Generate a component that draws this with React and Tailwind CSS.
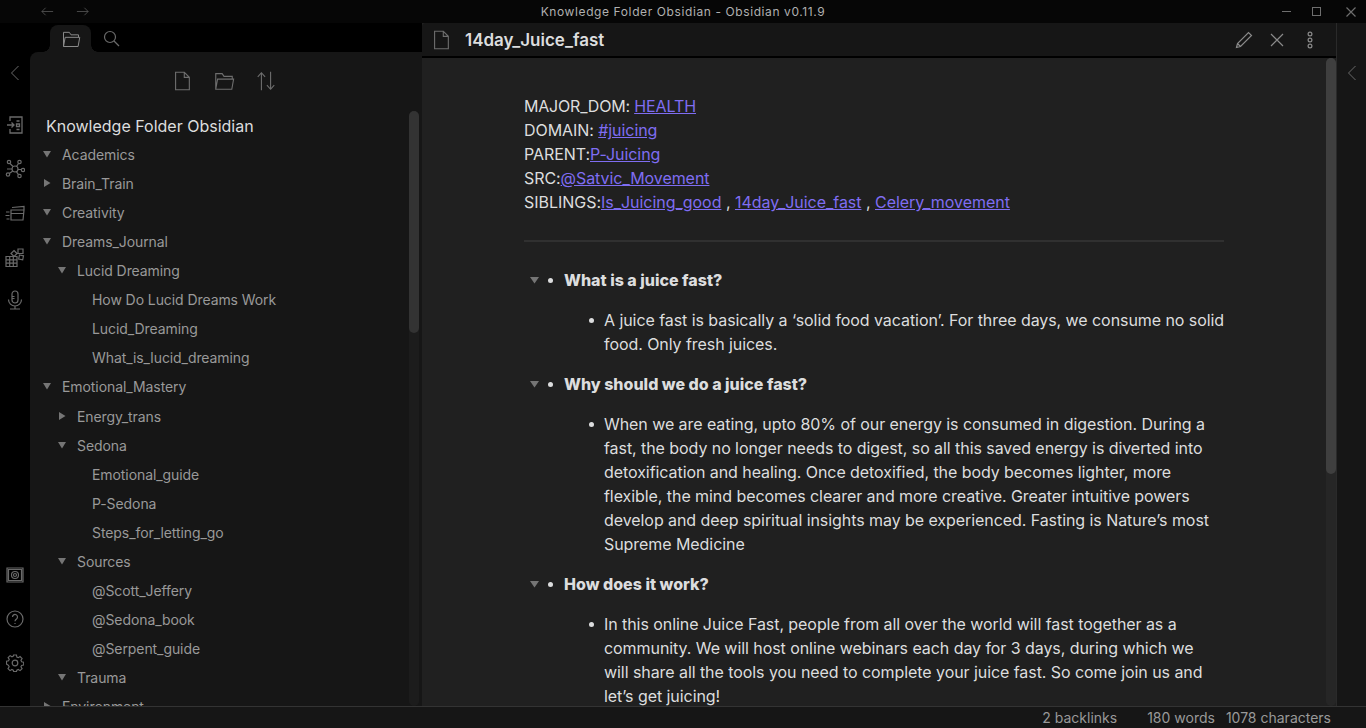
const font = { fontFamily: "Inter, 'Noto Sans', sans-serif" };

/* ───── Tree data: [depth, label, state] ───── */
const tree = [
  [0, "Academics", "open"],
  [0, "Brain_Train", "closed"],
  [0, "Creativity", "open"],
  [0, "Dreams_Journal", "open"],
  [1, "Lucid Dreaming", "open"],
  [2, "How Do Lucid Dreams Work"],
  [2, "Lucid_Dreaming"],
  [2, "What_is_lucid_dreaming"],
  [0, "Emotional_Mastery", "open"],
  [1, "Energy_trans", "closed"],
  [1, "Sedona", "open"],
  [2, "Emotional_guide"],
  [2, "P-Sedona"],
  [2, "Steps_for_letting_go"],
  [1, "Sources", "open"],
  [2, "@Scott_Jeffery"],
  [2, "@Sedona_book"],
  [2, "@Serpent_guide"],
  [1, "Trauma", "open"],
  [0, "Environment", "closed"],
];

const Icon = ({ size = 24, vb = 24, className = "", children }) => (
  <svg
    width={size}
    height={size}
    viewBox={`0 0 ${vb} ${vb}`}
    fill="none"
    stroke="currentColor"
    strokeWidth="1.2"
    className={className}
  >
    {children}
  </svg>
);

const FileIcon = ({ size = 20 }) => (
  <Icon size={size}>
    <path d="M5 2.5h9.5L20 8v13.5H5zM14.5 2.5V8H20" />
  </Icon>
);

const FolderIcon = ({ size = 20 }) => (
  <Icon size={size}>
    <path d="M3 21V4h7l2 3h9v3M3 21l2-11h17.500L20.500 21z" />
  </Icon>
);

const Triangle = ({ open }) => (
  <svg width="8" height="8" viewBox="0 0 8 8" className="-ml-px text-[#757575]" fill="currentColor">
    {open ? <path d="M0 1h8L4 7.500z" /> : <path d="M1 0v8l6.500-4z" />}
  </svg>
);

function TreeRow({ depth, label, state }) {
  const indent = ["pl-[14px]", "pl-[29px]", "pl-[44px]"][depth];
  // the tree slips one pixel down after Emotional_Mastery
  const nudge = label === "Energy_trans" ? "mt-px" : "";
  return (
    <div className={`flex h-[29px] shrink-0 items-center ${nudge} ${indent} text-[14px] tracking-[-0.08px] text-[#999]`}>
      <span className="flex w-[18px] shrink-0 items-center pb-[2px]">
        {state && <Triangle open={state === "open"} />}
      </span>
      <span className="whitespace-nowrap">{label}</span>
    </div>
  );
}

const A = ({ children }) => <a className="text-[#7f6df2] underline">{children}</a>;

function Section({ title, children }) {
  return (
    <div className="relative mb-[16px]">
      <div className="flex h-[24px] items-center pl-[40px] font-extrabold text-[#dcddde]">
        <span className="absolute left-[6px] top-[8px]">
          <svg width="9" height="8" viewBox="0 0 9 8" className="text-[#757575]" fill="currentColor">
            <path d="M0 1h9L4.500 7.500z" />
          </svg>
        </span>
        <span className="absolute left-[24px] top-[10px] h-[5px] w-[5px] rounded-full bg-[#dcddde]" />
        {title}
      </div>
      <div className="relative mt-[16px] whitespace-nowrap pl-[80px] tracking-[-0.065px]">
        <span className="absolute left-[65px] top-[10px] h-[5px] w-[5px] rounded-full bg-[#dcddde]" />
        {children}
      </div>
    </div>
  );
}

export default function App() {
  return (
    <div className="flex h-[728px] w-[1366px] flex-col overflow-hidden bg-black text-[16px] leading-[24px] text-[#dcddde]" style={font}>
      {/* ── Title bar ── */}
      <div className="relative flex h-[23px] shrink-0 items-center justify-center bg-[#060606] text-[12px] text-[#b0b0b0] tracking-[0.6px]">
        <div className="absolute left-[40px] top-[4px] flex gap-[20px] text-[#5c5c5c]">
          <Icon size={15}>
            <path d="M21 12H3M9 6l-6 6 6 6" />
          </Icon>
          <Icon size={15}>
            <path d="M3 12h18M15 6l6 6-6 6" />
          </Icon>
        </div>
        <span>Knowledge Folder Obsidian - Obsidian v0.11.9</span>
        <div className="absolute right-[0px] top-[0px] flex h-[23px] items-center text-[#6e6e6e]">
          <span className="mr-[21px] h-px w-[9px] bg-current" />
          <span className="mr-[25px] h-[9px] w-[9px] border border-current" />
          <Icon size={10} vb={10} className="mr-[10px]">
            <path d="M0.500 0.500l9 9M9.500 0.500l-9 9" />
          </Icon>
        </div>
      </div>

      <div className="flex min-h-0 flex-1">
        {/* ── Ribbon ── */}
        <div className="flex w-[30px] shrink-0 flex-col items-center bg-black text-[#6a6a6a]">
          <Icon size={16} vb={16} className="mt-[42px]">
            <path d="M11.500 1L4.500 8l7 7" strokeWidth="1" />
          </Icon>
          <Icon size={18} vb={18} className="mt-[35px]">
            <path d="M4 5V1h12v16H4v-4M1 9h7M5.500 6.500L8 9l-2.500 2.500M10.500 5h3M10.500 8h3v2.500h-3zM10.500 13.500h3" strokeWidth="1.300" />
          </Icon>
          <Icon size={20} vb={20} className="mt-[25px]">
            <circle cx="10" cy="10" r="3" />
            <circle cx="4" cy="3" r="1.700" />
            <circle cx="14.500" cy="3" r="1.700" />
            <circle cx="18" cy="11" r="1.700" />
            <circle cx="14.500" cy="17" r="1.700" />
            <circle cx="3" cy="15.500" r="1.700" />
            <path d="M5 4.500l3 3M13.500 4.500l-2 3M13 10.500h3.300M11.500 12.800l2 2.800M7.800 12l-3.500 2.500M2 10h5" />
          </Icon>
          <Icon size={20} vb={20} className="mt-[24px]">
            <path d="M6 7h13l-1 10H6zM6 10.500h12.600M7 4.500l12-1v3.500M1 9h3.500M0.500 12.500h4M1.500 16h3" />
          </Icon>
          <Icon size={20} vb={20} className="mt-[24px]">
            <path d="M1 9.500h11v10H1zM1 12.800h11M1 16.200h11M4.700 9.500v10M8.300 9.500v10M13 2l5 0 0 4.500-5 0zM14.500 8l4 .8-.8 4-4-.8zM9 3.500l3 3-3 3-3-3z" />
          </Icon>
          <Icon size={20} vb={20} className="mt-[23px]">
            <path d="M7 4a3 3 0 016 0v6a3 3 0 01-6 0zM3.500 9.500a6.500 6.500 0 0013 0M10 16v2.500M5 19h10M7 6.500h2.500M7 8.500h2.500" />
          </Icon>
          <div className="flex-1" />
          <Icon size={18} vb={18} className="mb-[26px]">
            <path d="M1 2h16v14H1zM2.500 3.500h13v11h-13z" />
            <circle cx="9" cy="9" r="3.500" />
            <circle cx="9" cy="9" r="1.500" />
          </Icon>
          <Icon size={18} vb={18} className="mb-[26px]">
            <circle cx="9" cy="9" r="8" />
            <path d="M6.500 7a2.500 2.500 0 114 2c-1 .7-1.500 1.200-1.500 2.300M9 13v1" />
          </Icon>
          <Icon size={18} vb={18} className="mb-[34px]">
            <circle cx="9" cy="9" r="2.800" />
            <path d="M7.500 1h3l.4 2.200 1.500.7 1.900-1.200 2.100 2.100-1.200 1.900.7 1.500 2.200.4v3l-2.200.4-.7 1.500 1.200 1.900-2.100 2.100-1.900-1.200-1.500.7-.4 1.400h-3l-.4-1.400-1.500-.7-1.900 1.200-2.100-2.100 1.200-1.900-.7-1.500L0 10.600v-3l2.200-.4.700-1.500L1.700 3.800l2.100-2.100 1.900 1.200 1.500-.7z" transform="translate(0.500 0) scale(0.950)" />
          </Icon>
        </div>

        {/* ── File explorer ── */}
        <div className="flex w-[392px] shrink-0 flex-col">
          <div className="flex h-[29px] shrink-0 items-end bg-black pl-[20px] text-[#6a6a6a]">
            <div className="relative flex h-[27px] w-[41px] items-center justify-center rounded-t-[8px] bg-[#161616] text-[#8a8a8a]">
              <span className="absolute bottom-0 right-full h-[7px] w-[7px] bg-[radial-gradient(circle_at_0_0,transparent_6.5px,#161616_7px)]" />
              <FolderIcon size={20} />
              <span className="absolute bottom-0 left-full h-[7px] w-[7px] bg-[radial-gradient(circle_at_100%_0,transparent_6.5px,#161616_7px)]" />
            </div>
            <div className="ml-[12px] flex h-[27px] items-center">
              <Icon size={17} vb={17}>
                <circle cx="7" cy="7" r="5.500" />
                <path d="M11 11l5 5" />
              </Icon>
            </div>
          </div>
          <div className="flex min-h-0 flex-1 rounded-tl-[8px] bg-[#161616]">
            <div className="flex min-w-0 flex-1 flex-col overflow-hidden">
              <div className="mt-[18px] flex shrink-0 items-center justify-center gap-[20px] pl-[8px] text-[#6e6e6e]">
                <FileIcon size={22} />
                <FolderIcon size={22} />
                <Icon size={22}>
                  <path d="M7 22V3M3 7.500L7 3l4 4.500M17 2v19M13 16.500l4 4.500 4-4.500" />
                </Icon>
              </div>
              <div className="mt-[22px] h-[26px] shrink-0 pl-[16px] text-[16px] text-[#dcddde]">Knowledge Folder Obsidian</div>
              {tree.map(([depth, label, state]) => (
                <TreeRow key={label} depth={depth} label={label} state={state} />
              ))}
            </div>
            <div className="mt-[59px] flex w-[13px] shrink-0 pr-[3px]">
              <div className="w-[10px] self-stretch rounded-[5px] bg-[#1c1c1c]">
                <div className="h-[222px] rounded-[5px] bg-[#333]" />
              </div>
            </div>
          </div>
        </div>

        {/* ── Note pane ── */}
        <div className="flex min-w-0 flex-1 flex-col border-r border-[#2a2a2a] bg-[#202020]">
          <div className="flex h-[35px] shrink-0 items-center rounded-tl-[4px] border-b-2 border-black bg-[#161616] pl-[8px] pr-[17px]">
            <span className="text-[#6e6e6e]">
              <FileIcon size={22} />
            </span>
            <span className="ml-[13px] flex-1 text-[17px] font-semibold text-[#dcddde]">14day_Juice_fast</span>
            <div className="flex items-center text-[#8a8a8a]">
              <Icon size={18} vb={18}>
                <path d="M1.500 16.500l1-4L13.500 1.500l3 3L5.500 15.500zM2.500 12.500l3 3" />
              </Icon>
              <Icon size={18} vb={18} className="ml-[15px]">
                <path d="M3 3l12 12M15 3L3 15" />
              </Icon>
              <Icon size={18} vb={18} className="ml-[15px]">
                <circle cx="9" cy="3" r="1.900" />
                <circle cx="9" cy="9" r="1.900" />
                <circle cx="9" cy="15" r="1.900" />
              </Icon>
            </div>
          </div>
          <div className="flex min-h-0 flex-1">
            <div className="min-w-0 flex-1 overflow-hidden">
              <div className="ml-[102px] w-[700px] pt-[36px]">
                <div className="tracking-[-0.065px]">
                  <p><span className="tracking-[-0.2px]">MAJOR_DOM: </span><A>HEALTH</A></p>
                  <p>DOMAIN: <A>#juicing</A></p>
                  <p>PARENT:<A>P-Juicing</A></p>
                  <p>SRC:<A>@Satvic_Movement</A></p>
                  <p className="tracking-[-0.03px]">SIBLINGS:<A>Is_Juicing_good</A> , <A>14day_Juice_fast</A> , <A>Celery_movement</A></p>
                </div>
                <hr className="mb-[26px] mt-[26px] border-t-2 border-[#303030]" />
                <Section title="What is a juice fast?">
                  A juice fast is basically a ‘solid food vacation’. For three days, we consume no solid<br />
                  food. Only fresh juices.
                </Section>
                <Section title="Why should we do a juice fast?">
                  When we are eating, upto 80% of our energy is consumed in digestion. During a<br />
                  fast, the body no longer needs to digest, so all this saved energy is diverted into<br />
                  detoxification and healing. Once detoxified, the body becomes lighter, more<br />
                  flexible, the mind becomes clearer and more creative. Greater intuitive powers<br />
                  develop and deep spiritual insights may be experienced. Fasting is Nature’s most<br />
                  Supreme Medicine
                </Section>
                <Section title="How does it work?">
                  In this online Juice Fast, people from all over the world will fast together as a<br />
                  community. We will host online webinars each day for 3 days, during which we<br />
                  will share all the tools you need to complete your juice fast. So come join us and<br />
                  let’s get juicing!
                </Section>
              </div>
            </div>
            <div className="w-[10px] shrink-0 rounded-[5px] bg-[#262626]">
              <div className="h-[416px] rounded-[5px] bg-[#3f3f3f]" />
            </div>
          </div>
        </div>

        {/* ── Right collapsed sidebar ── */}
        <div className="flex w-[29px] shrink-0 justify-center bg-[#161616] pt-[42px] text-[#6a6a6a]">
          <Icon size={16} vb={16}>
            <path d="M11.500 1L4.500 8l7 7" strokeWidth="1" />
          </Icon>
        </div>
      </div>

      {/* ── Status bar ── */}
      <div className="flex h-[22px] shrink-0 items-center justify-end gap-[11px] border-t border-[#333] bg-[#161616] pr-[35px] text-[14px] text-[#999]">
        <span className="mr-[19px]">2 backlinks</span>
        <span>180 words</span>
        <span>1078 characters</span>
      </div>
    </div>
  );
}
